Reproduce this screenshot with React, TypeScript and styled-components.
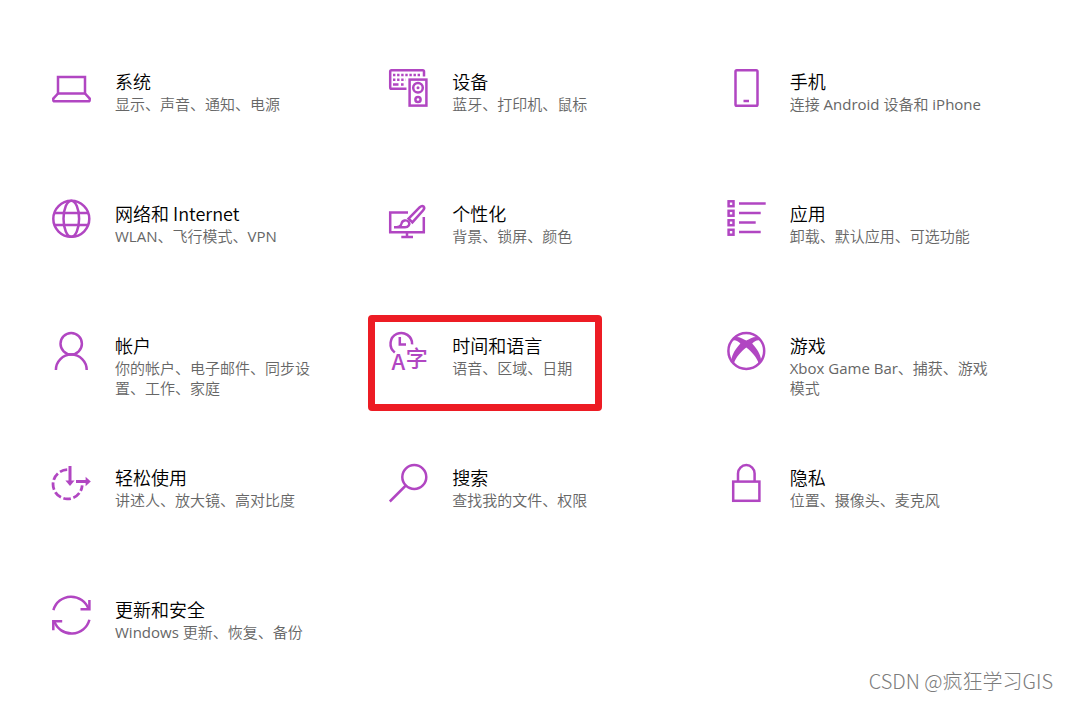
import React from "react";
import styled, { createGlobalStyle, css } from "styled-components";

const GlobalStyle = createGlobalStyle`
  *, *::before, *::after { box-sizing: border-box; }
  body {
    margin: 0;
    background: #ffffff;
    font-family: "Open Sans", "Noto Sans CJK SC DemiLight", "Noto Sans CJK SC", sans-serif;
  }
`;

const Page = styled.main`
  position: relative;
  min-height: 100vh;
  padding: 51px 25px 20px 31px;
`;

const CategoryGrid = styled.nav`
  display: grid;
  grid-template-columns: repeat(3, minmax(0, 1fr));
  row-gap: 36px;
`;

const Tile = styled.a<{ $marked?: boolean }>`
  position: relative;
  display: flex;
  align-items: flex-start;
  gap: 24px;
  min-height: 96px;
  padding: 16px 0 0 20px;
  color: inherit;
  text-decoration: none;

  ${(p) =>
    p.$marked &&
    css`
      &::after {
        content: "";
        position: absolute;
        inset: 0 auto 0 0;
        width: 234px;
        border: 7px solid #ed1c24;
        border-radius: 4px;
      }
    `}
`;

const Icon = styled.svg`
  flex: none;
  width: 40px;
  height: 40px;
  overflow: visible;
  fill: none;
  stroke: #b146c2;
  stroke-width: 2.5;

  .solid {
    fill: #b146c2;
    stroke: none;
  }

  text {
    font-family: "Noto Sans CJK SC", sans-serif;
    font-weight: 500;
    font-size: 22px;
  }
`;

const Label = styled.div`
  max-width: 204px;
  padding-top: 1px;
`;

const Title = styled.div`
  font-family: "Noto Sans CJK SC", sans-serif;
  font-size: 18px;
  line-height: 26px;
  font-weight: 350;
  color: #000000;
`;

const Detail = styled.div`
  font-size: 15px;
  line-height: 20px;
  font-weight: 400;
  color: #666666;
`;

const Watermark = styled.div`
  position: absolute;
  right: 15px;
  bottom: 6px;
  font-family: "Noto Sans CJK SC", sans-serif;
  font-size: 20px;
  line-height: 28px;
  font-weight: 300;
  color: #7c7c7c;
`;

const icons = {
  system: (
    <>
      <path d="M7 26.5V10H34V26.5Z" />
      <path d="M7 26.5L2.3 31.6V33Q2.3 34.3 3.6 34.3H37.4Q38.7 34.3 38.7 33V31.6L34 26.5" />
    </>
  ),
  devices: (
    <>
      <path d="M36 9.5V4.5Q36 3.2 34.7 3.2H3.5Q2.2 3.2 2.2 4.5V20.5Q2.2 21.8 3.5 21.8H18.5" />
      <path d="M5 8H33" strokeDasharray="2.4 1.7" />
      <path d="M5 12.7H17.5" strokeDasharray="2.4 1.7" />
      <path d="M5 17.4H10.5M13 17.4H15.6" />
      <rect x="21.6" y="12.6" width="16.8" height="26" />
      <circle cx="30" cy="20.7" r="4.8" />
      <circle className="solid" cx="30" cy="20.7" r="1.5" />
      <circle cx="30" cy="32.5" r="2.6" />
    </>
  ),
  phone: (
    <>
      <rect x="9.5" y="3.2" width="22" height="35.5" rx="1.3" />
      <path d="M17.5 34H23" />
    </>
  ),
  network: (
    <>
      <circle cx="20.3" cy="19.8" r="18" />
      <ellipse cx="20.3" cy="19.8" rx="7.8" ry="18" />
      <path d="M3.5 14H37M3.5 26H37" />
    </>
  ),
  personal: (
    <>
      <path d="M20 13.6H2.2V33.2H35.8V18" />
      <path d="M19 33V38M13.3 38H25" />
      <path
        d="M20.6 19.6L31.8 8.2Q34 6.2 35.6 7.6Q37 9.2 35 11.5L24.4 23.4Z"
        strokeWidth="2.6"
      />
      <path
        d="M6 28.3C11 28.3 13.2 27.2 13.6 24.4C14.2 21.2 18.6 20.4 20.6 22.8C22.4 25.4 20.4 28.3 17 28.3Z"
        strokeWidth="2.4"
      />
    </>
  ),
  apps: (
    <>
      {[0, 1, 2, 3].map((i) => (
        <rect key={i} x="2.6" y={2.3 + i * 9.5} width="4.9" height="4.9" />
      ))}
      <path d="M13 4.6H39.7M13 14.1H34.7M13 23.6H29.7M13 33.1H34.7" />
    </>
  ),
  account: (
    <>
      <circle cx="20.2" cy="12.8" r="10.7" />
      <path d="M4.9 39A15.4 15.4 0 0 1 35.7 39" />
    </>
  ),
  time: (
    <>
      <path d="M6.8 21.4A10.8 10.8 0 1 1 24.1 13.4" />
      <path d="M11.8 6V13.5H18" />
      <text className="solid" x="3.6" y="39">
        A
      </text>
      <text className="solid" x="17.8" y="34.5">
        字
      </text>
    </>
  ),
  gaming: (
    <>
      <circle cx="20.3" cy="20" r="17.9" />
      <path
        className="solid"
        d="M7.4 6.6C11.6 4.6 16.6 7.4 20.3 9.6C24 7.4 29 4.6 33.2 6.6L34 9.4C31 8.6 28.4 10.2 26.2 12.6C30.8 17.4 34.8 24 35 28.6L32.6 32.4C31 26.6 25.4 20.4 20.3 16.6C15.2 20.4 9.6 26.6 8 32.4L5.6 28.6C5.8 24 9.8 17.4 14.4 12.6C12.2 10.2 9.6 8.6 6.6 9.4Z"
      />
    </>
  ),
  ease: (
    <>
      <path
        d="M16.2 6.7A14.6 14.6 0 1 0 31.2 22.4"
        strokeWidth="2.8"
        strokeDasharray="7.6 2.6"
      />
      <path d="M19 3V20M25 18.5H36" strokeWidth="3" />
      <path className="solid" d="M14.4 17.6H23.6L19 23Z" />
      <path className="solid" d="M34.6 13.8V23.2L39.8 18.5Z" />
    </>
  ),
  search: (
    <>
      <circle cx="26.3" cy="14" r="12" />
      <path d="M17.8 22.5L1.8 38.5" />
    </>
  ),
  privacy: (
    <>
      <rect x="7.2" y="18.6" width="26.2" height="19.2" />
      <path d="M12 18.5V10.4A8.3 8.3 0 0 1 28.6 10.4V18.5" />
    </>
  ),
  update: (
    <>
      <path d="M2.4 15.2A18.4 18.4 0 0 1 37.6 14.2" />
      <path d="M38.4 5V14.2H29.5" />
      <path d="M38.4 24.8A18.4 18.4 0 0 1 3.2 26.2" />
      <path d="M2.3 35.3V26.2H11.2" />
    </>
  ),
};

interface Category {
  icon: keyof typeof icons;
  title: string;
  detail: string;
  marked?: boolean;
}

const categories: Category[] = [
  { icon: "system", title: "系统", detail: "显示、声音、通知、电源" },
  { icon: "devices", title: "设备", detail: "蓝牙、打印机、鼠标" },
  { icon: "phone", title: "手机", detail: "连接 Android 设备和 iPhone" },
  { icon: "network", title: "网络和 Internet", detail: "WLAN、飞行模式、VPN" },
  { icon: "personal", title: "个性化", detail: "背景、锁屏、颜色" },
  { icon: "apps", title: "应用", detail: "卸载、默认应用、可选功能" },
  { icon: "account", title: "帐户", detail: "你的帐户、电子邮件、同步设置、工作、家庭" },
  { icon: "time", title: "时间和语言", detail: "语音、区域、日期", marked: true },
  { icon: "gaming", title: "游戏", detail: "Xbox Game Bar、捕获、游戏模式" },
  { icon: "ease", title: "轻松使用", detail: "讲述人、放大镜、高对比度" },
  { icon: "search", title: "搜索", detail: "查找我的文件、权限" },
  { icon: "privacy", title: "隐私", detail: "位置、摄像头、麦克风" },
  { icon: "update", title: "更新和安全", detail: "Windows 更新、恢复、备份" },
];

export default function App() {
  return (
    <Page lang="zh-CN">
      <GlobalStyle />
      <CategoryGrid>
        {categories.map((c) => (
          <Tile key={c.icon} href={`#${c.icon}`} $marked={c.marked}>
            <Icon viewBox="0 0 40 40" aria-hidden="true">
              {icons[c.icon]}
            </Icon>
            <Label>
              <Title>{c.title}</Title>
              <Detail>{c.detail}</Detail>
            </Label>
          </Tile>
        ))}
      </CategoryGrid>
      <Watermark>CSDN @疯狂学习GIS</Watermark>
    </Page>
  );
}
